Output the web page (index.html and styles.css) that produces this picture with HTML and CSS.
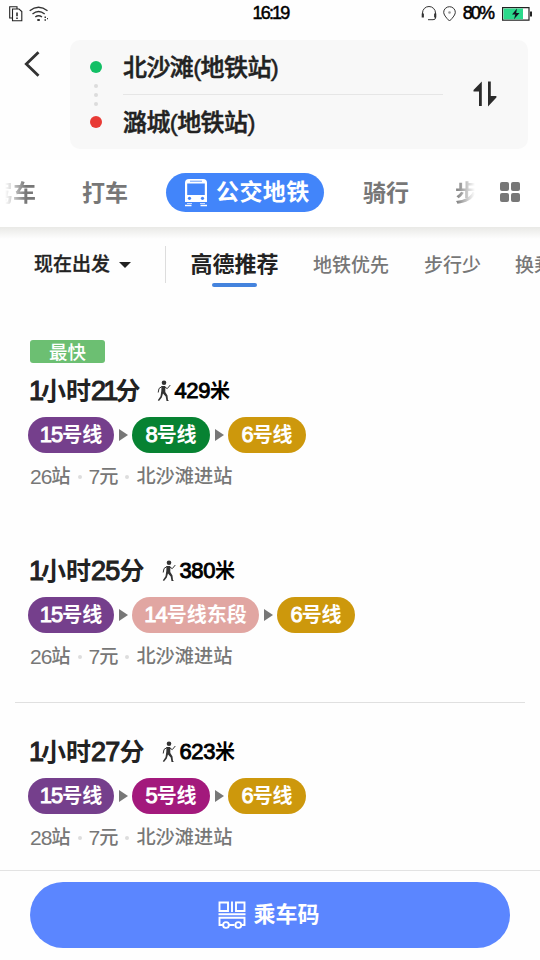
FILE: index.html
```
<!DOCTYPE html>
<html lang="zh-CN">
<head>
<meta charset="utf-8">
<title>公交地铁路线</title>
<link rel="stylesheet" href="styles.css">
</head>
<body>
<svg class="defs" width="0" height="0">
  <symbol id="walk" viewBox="0 0 14 22">
    <circle cx="7" cy="2.8" r="2.3"/>
    <path d="M4.5 6 L8.3 6 L8.3 12 L10.5 15.5 L11 20 L12 21 L9.5 21 L8.7 16.5 L6 13.5 L4.8 17.5 L2 21 L.8 20.3 L3.5 16.3 L4.3 11Z"/>
    <path d="M5 6.5 L2 8.5 L1.2 12.5 M8 7.3 L10.3 8.6 L13.3 5" fill="none" stroke="currentColor" stroke-width="1"/>
  </symbol>
</svg>
<div class="app">
  <header class="status">
    <div class="status-side">
      <svg width="14" height="16" viewBox="0 0 14 16" fill="none" stroke="#222" stroke-width="1.1"><path d="M3 12H.7V.7H8V3"/><path d="M3.5 3H10L12.8 5.5V14.8H3.5Z"/><path d="M8 6.5V10.3M8 11.5V13" stroke-width="1.5"/></svg>
      <svg class="wifi" width="20" height="16" viewBox="0 0 20 16" fill="none" stroke="#333" stroke-width="1.4"><path d="M.7 4.8Q9.5-2.2 18.5 4.8M3.5 8Q9.5 3 15.7 8M6.3 11Q9.5 8.4 13 11"/><path d="M8.3 14H10.8" stroke-width="2"/><path d="M15.5 11.3H17M15.5 14H17M18 12.6H19" /></svg>
    </div>
    <div class="clock">16:19</div>
    <div class="status-side status-right">
      <svg width="16" height="15" viewBox="0 0 16 15" fill="none" stroke="#333" stroke-width="1"><path d="M1.5 8.5V7A6.3 6.3 0 0 1 14.5 7V12Q14.5 13.7 12 13.7H7"/><path d="M1.8 7.5V11.5M14.2 7.5V11.5" stroke-width="2.2"/></svg>
      <svg class="pin" width="13" height="16" viewBox="0 0 13 16" fill="none" stroke="#333" stroke-width="1"><path d="M6.5 15Q.7 9.5.7 6.3A5.8 5.6 0 0 1 12.3 6.3Q12.3 9.5 6.5 15Z"/><circle cx="6.5" cy="6.5" r="1.3" fill="#999" stroke="none"/></svg>
      <span class="percent">80%</span>
      <svg class="battery" width="30" height="14" viewBox="0 0 30 14"><path d="M.6.6H27V13.2H.6Z" fill="#fff" stroke="#222" stroke-width="1.2"/><path d="M1.5 1.5H21V12.3H1.5Z" fill="#2bd98b"/><path d="M28 4.5H30V9.5H28Z" fill="#222"/><path d="M15 1.5L10 7.5H13.3L12 12.3L17.5 6H14.2Z" fill="#112"/></svg>
    </div>
  </header>

  <section class="search">
    <svg class="back" width="16" height="26" viewBox="0 0 16 26" fill="none" stroke="#333" stroke-width="2.8"><path d="M14.5 1.2L2.3 13L14.5 24.8"/></svg>
    <div class="endpoints">
      <div class="markers"><i class="dot start"></i><i class="mini"></i><i class="mini"></i><i class="mini"></i><i class="dot end"></i></div>
      <div class="stations">
        <div class="station">北沙滩(地铁站)</div>
        <div class="station second">潞城(地铁站)</div>
      </div>
      <svg class="swap" width="24" height="26" viewBox="0 0 24 26" fill="#2b2b2b"><path d="M8.8.5V25H6V10.5H.5V9Z"/><path d="M15 .5H17.8V15H23.4V16.5L15 25.5Z"/></svg>
    </div>
  </section>

  <nav class="modes">
    <div class="mode cut-left"><span>驾车</span></div>
    <div class="mode taxi">打车</div>
    <div class="mode active">
      <svg width="24" height="29" viewBox="0 0 24 29"><path d="M5 1H19Q23 1 23 5V24H1V5Q1 1 5 1Z" fill="#fff"/><path d="M3.2 5.5H20.8V17H3.2Z" fill="#4285fa"/><circle cx="5.5" cy="20.3" r="1.6" fill="#4285fa"/><circle cx="18.5" cy="20.3" r="1.6" fill="#4285fa"/><path d="M6 3.2H18" stroke="#4285fa" stroke-width=".8"/><path d="M1 27.5H7.5M16.5 27.5H23" stroke="#fff" stroke-width="1.5"/><path d="M3 25.5H8M16 25.5H21" stroke="#fff" stroke-width=".7"/></svg>
      <span>公交地铁</span>
    </div>
    <div class="mode ride">骑行</div>
    <div class="mode cut-right"><span>步行</span></div>
    <div class="grid"><i></i><i></i><i></i><i></i></div>
  </nav>

  <div class="filters">
    <div class="depart">现在出发<i class="caret"></i></div>
    <div class="filter on">高德推荐</div>
    <div class="filter f2">地铁优先</div>
    <div class="filter f3">步行少</div>
    <div class="filter f4">换乘少</div>
  </div>

  <main class="routes">
    <article class="route first">
      <div class="badge">最快</div>
      <div class="head"><h2><b class="one">1</b>小时<b class="tight">21</b>分</h2><svg class="walk" width="14" height="22"><use href="#walk"/></svg><span class="dist"><b>429</b>米</span></div>
      <div class="lines"><span class="pill l15"><b>15</b>号线</span><i class="arrow"></i><span class="pill l8"><b>8</b>号线</span><i class="arrow"></i><span class="pill l6"><b>6</b>号线</span></div>
      <div class="meta"><b>26</b>站<i></i><b>7</b>元<i></i>北沙滩进站</div>
    </article>
    <article class="route second-route">
      <div class="head"><h2><b class="one">1</b>小时<b>25</b>分</h2><svg class="walk" width="14" height="22"><use href="#walk"/></svg><span class="dist"><b>380</b>米</span></div>
      <div class="lines"><span class="pill l15"><b>15</b>号线</span><i class="arrow"></i><span class="pill l14"><b>14</b>号线东段</span><i class="arrow"></i><span class="pill l6"><b>6</b>号线</span></div>
      <div class="meta"><b>26</b>站<i></i><b>7</b>元<i></i>北沙滩进站</div>
    </article>
    <article class="route third">
      <div class="head"><h2><b class="one">1</b>小时<b>27</b>分</h2><svg class="walk" width="14" height="22"><use href="#walk"/></svg><span class="dist"><b>623</b>米</span></div>
      <div class="lines"><span class="pill l15"><b>15</b>号线</span><i class="arrow"></i><span class="pill l5"><b>5</b>号线</span><i class="arrow"></i><span class="pill l6"><b>6</b>号线</span></div>
      <div class="meta"><b>28</b>站<i></i><b>7</b>元<i></i>北沙滩进站</div>
    </article>
  </main>

  <footer class="footer">
    <div class="ride-code">
      <svg width="28" height="28" viewBox="0 0 28 28" fill="none" stroke="#fff" stroke-width="1.9"><path d="M1.5 1.5H10V10H1.5ZM18 1.5H26.5V10H18ZM14 .5V11M.5 13.2H27.5"/><path d="M5 24H1.5V16.8H26.5V24H23.5M11 24H16.5"/><circle cx="8" cy="24" r="2.9"/><circle cx="20.3" cy="24" r="2.9"/></svg>
      <span>乘车码</span>
    </div>
  </footer>
</div>
</body>
</html>
```

FILE: styles.css
```
* { box-sizing: border-box; }
body { margin: 0; background: #fefefe; font-family: "Liberation Sans", "Noto Sans CJK SC", sans-serif; color: #222; }
i { font-style: normal; display: block; flex: none; }
svg { display: block; flex: none; }
.defs { position: absolute; }
.app { width: 540px; height: 960px; overflow: hidden; display: flex; flex-direction: column; white-space: nowrap; }

.status { height: 27px; flex: none; display: grid; grid-template-columns: 1fr auto 1fr; align-items: center; padding: 0 8px 0 9px; color: #000; }
.status-side { display: flex; align-items: center; }
.wifi { margin-left: 6px; }
.status-right { justify-content: flex-end; }
.pin { margin-left: 6px; }
.clock { font-size: 18px; letter-spacing: -1.8px; -webkit-text-stroke: .5px #000; }
.percent { font-size: 18px; letter-spacing: -1.9px; margin-left: 7px; -webkit-text-stroke: .5px #000; }
.battery { margin-left: 9px; }

.search { height: 133px; flex: none; display: flex; padding: 13px 12px 0 24px; }
.back { margin-top: 11px; }
.endpoints { margin-left: 30px; width: 458px; height: 109px; background: #f8f8f8; border-radius: 10px; display: flex; }
.markers { width: 12px; margin: 21px 0 0 20px; display: flex; flex-direction: column; align-items: center; }
.dot { width: 12px; height: 12px; border-radius: 50%; }
.start { background: #12bf65; margin-bottom: 7px; }
.end { background: #e83a35; margin-top: 9px; }
.mini { width: 4px; height: 4px; border-radius: 50%; background: #dcdcdc; margin: 4px 0 1px; }
.mini + .mini { margin-top: 4px; }
.stations { margin-left: 21px; width: 320px; font-weight: 500; font-size: 24px; letter-spacing: -.6px; -webkit-text-stroke: .5px #222; }
.station { height: 55px; line-height: 56px; border-bottom: 1px solid #e6e6e6; }
.second { height: 54px; border: 0; line-height: 55px; }
.swap { margin: 41px 0 0 30px; }

.modes { height: 67px; flex: none; display: flex; align-items: center; padding-bottom: 3px; color: #777; font-weight: 700; font-size: 23px; background: #fff; }
.mode { height: 39px; line-height: 40px; flex: none; }
.cut-left { width: 36px; margin-right: 46px; display: flex; justify-content: flex-end; overflow: hidden; -webkit-mask-image: linear-gradient(90deg, transparent 5px, #000 26px); mask-image: linear-gradient(90deg, transparent 5px, #000 26px); }
.taxi { width: 84px; }
.active { width: 158px; background: #4285fa; color: #fff; border-radius: 20px; display: flex; align-items: center; padding-left: 18px; gap: 8px; letter-spacing: .4px; }
.ride { margin-left: 39px; width: 92px; }
.cut-right { width: 20px; overflow: hidden; -webkit-mask-image: linear-gradient(90deg, #000, transparent 20px); mask-image: linear-gradient(90deg, #000, transparent 20px); }
.grid { margin-left: 25px; display: grid; grid-template-columns: 9px 9px; gap: 2px; }
.grid i { height: 9px; border-radius: 2px; background: #777; }

.filters { height: 75px; flex: none; background: linear-gradient(#e9e9e6, #fefefe 12px); display: flex; align-items: flex-start; padding: 19px 0 0 34px; font-size: 19px; color: #777; }
.depart { flex: none; width: 132px; height: 37px; line-height: 39px; border-right: 1px solid #ddd; color: #222; font-weight: 500; display: flex; align-items: center; -webkit-text-stroke: .3px #222; }
.caret { margin-left: 9px; border: 6px solid transparent; border-top: 6px solid #222; border-bottom: 0; }
.filter { height: 41px; line-height: 39px; font-weight: 500; flex: none; }
.on { margin-left: 25px; width: 87px; font-size: 22px; line-height: 37px; font-weight: 700; color: #222; display: flex; flex-direction: column; align-items: center; }
.on::after { content: ""; flex: none; width: 45px; height: 4px; border-radius: 2px; background: #4483dd; }
.f2 { margin-left: 35px; }
.f3 { margin-left: 35px; }
.f4 { margin-left: 34px; }

.routes { flex: none; height: 568px; padding: 0 15px; }
.route { padding-left: 14px; }
.first { padding-top: 38px; height: 248px; }
.badge { width: 75px; height: 23px; line-height: 25px; margin-left: 1px; background: #6cbf72; border-radius: 3px; color: #fff; text-align: center; font-size: 18.5px; font-weight: 500; margin-bottom: 10px; }
.second-route { height: 153px; border-bottom: 1px solid #e0e0e0; padding-top: 3px; }
.third { padding-top: 31px; }
.head { height: 36px; display: flex; align-items: center; }
h2 { margin: 0; font-size: 25px; line-height: 38px; font-weight: 700; letter-spacing: 0; }
h2 b { font-size: 27px; font-weight: 400; letter-spacing: -.8px; -webkit-text-stroke: 1.1px #222; }
h2 .one { letter-spacing: -3px; }
h2 .tight { letter-spacing: -2.8px; }
.walk { margin-left: 17px; fill: #333; color: #333; }
.first .walk { margin-left: 16px; }
.dist { margin-left: 4px; font-size: 20px; font-weight: 700; color: #000; line-height: 38px; }
.dist b { font-size: 22px; letter-spacing: -.4px; font-weight: 400; -webkit-text-stroke: .9px #000; }
.lines { display: flex; align-items: center; margin: 8px 0 0 -1px; height: 36px; }
.pill { height: 36px; line-height: 36px; border-radius: 18px; color: #fff; font-size: 20px; font-weight: 700; width: 78px; text-align: center; }
.pill b { font-size: 22px; letter-spacing: -1px; font-weight: 400; -webkit-text-stroke: .9px #fff; }
.l15 { background: #753f8c; width: 86px; }
.l8 { background: #078232; }
.l6 { background: #cd980c; }
.l5 { background: #a3197c; }
.l14 { background: #e1a6a2; width: 127px; }
.arrow { border: 6px solid transparent; border-left: 9px solid #777; border-right: 0; margin: 0 4px 0 5px; }
.meta { display: flex; align-items: center; height: 36px; line-height: 38px; margin: 6px 0 0 1px; font-size: 19.2px; font-weight: 500; color: #777; }
.meta b { font-weight: 400; font-size: 21px; letter-spacing: -1px; }
.meta i { width: 4px; height: 4px; border-radius: 50%; background: #ddd; margin: 0 7px; }

.footer { flex: none; height: 90px; border-top: 1px solid #e3e3e3; padding: 11px 30px 0; }
.ride-code { height: 66px; border-radius: 33px; background: #5b86ff; color: #fff; display: flex; align-items: center; justify-content: center; gap: 7px; font-size: 22px; line-height: 30px; font-weight: 700; padding-right: 2px; }
.ride-code span { margin-top: -1px; }
```
